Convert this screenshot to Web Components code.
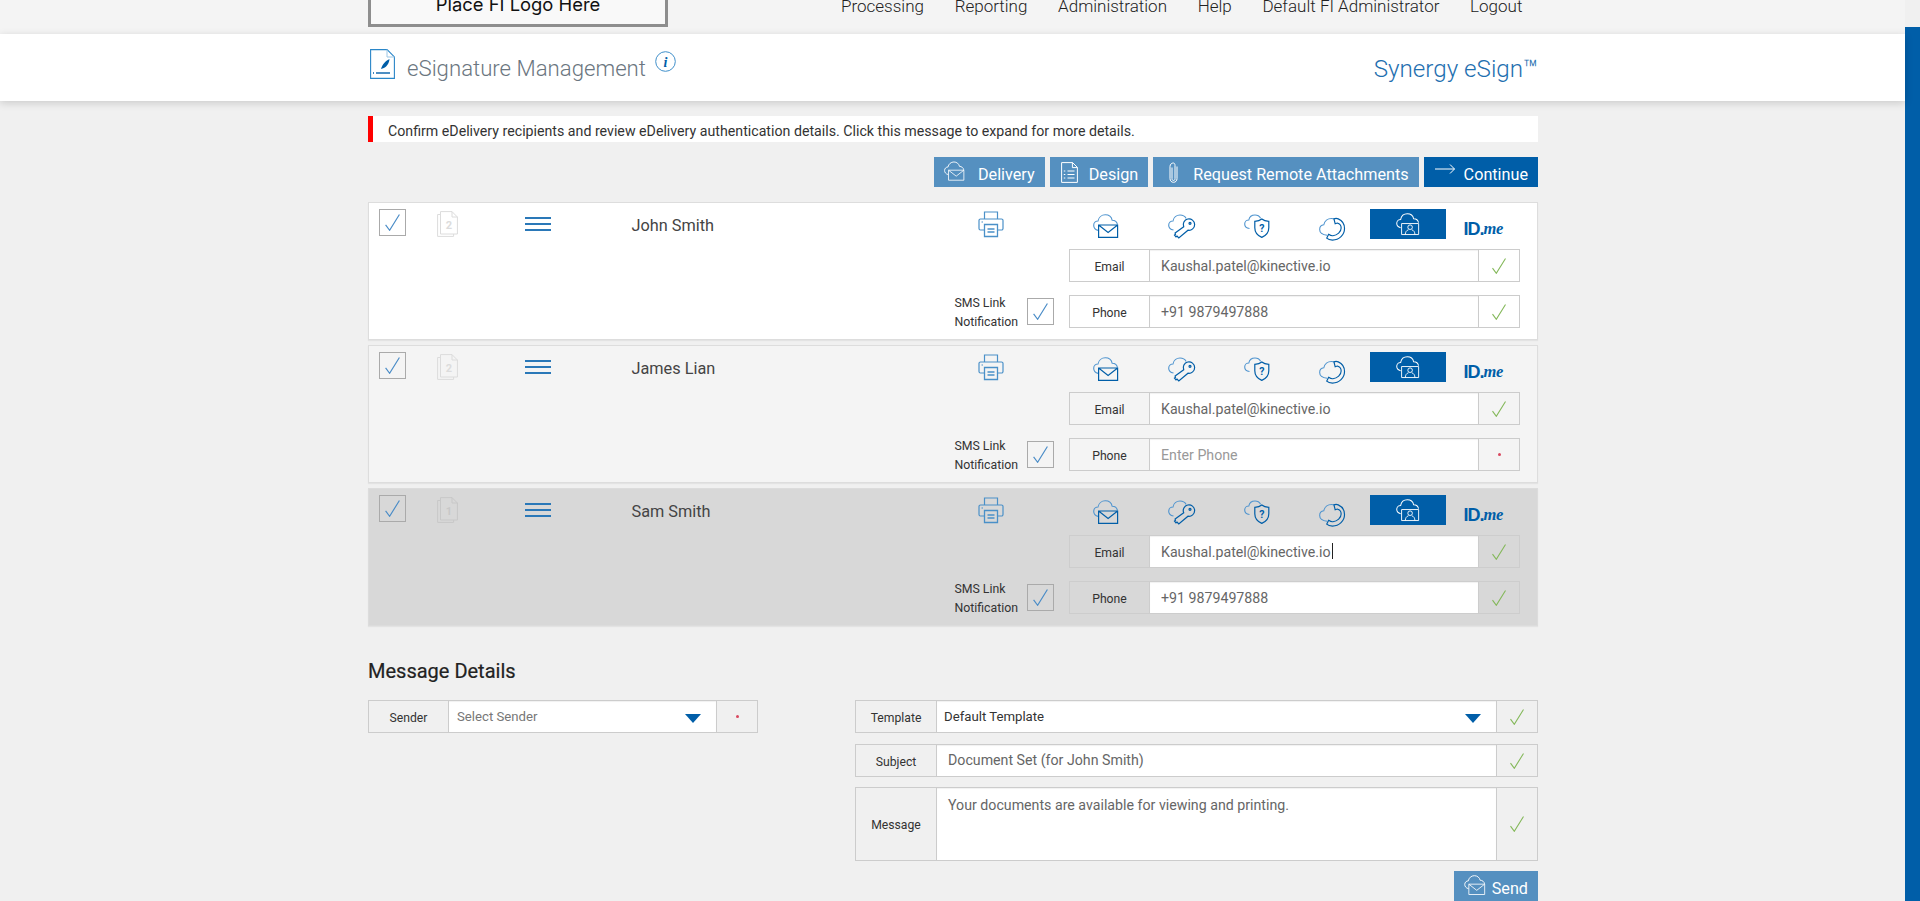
<!DOCTYPE html>
<html>
<head>
<meta charset="utf-8">
<title>eSignature Management</title>
<style>
    html, body { margin: 0; height: 100%; overflow: hidden; }
    body { background: #f0f0f0; font-family: Roboto, "Liberation Sans", sans-serif; color: #333; }
    esign-page { height: 901px; }
</style>
</head>
<body>

<esign-page>
    <top-nav>
        <span slot="logo">Place FI Logo Here</span>
        <span>Processing</span>
        <span>Reporting</span>
        <span>Administration</span>
        <span>Help</span>
        <span>Default FI Administrator</span>
        <span>Logout</span>
    </top-nav>
    <title-band>
        <span slot="title">eSignature Management</span>
        <span slot="product">Synergy eSign™</span>
    </title-band>

    <page-body>
        <alert-bar>Confirm eDelivery recipients and review eDelivery authentication details. Click this message to expand for more details.</alert-bar>

        <tool-bar>
            <action-button icon="envelope" icon-w="21" icon-h="20" pad="10" gap="13" end="10" top="-1">Delivery</action-button>
            <action-button icon="list" icon-w="17" icon-h="21" pad="11" gap="11" end="10">Design</action-button>
            <action-button icon="clip" icon-w="9" icon-h="21" pad="16" gap="15" end="10">Request Remote Attachments</action-button>
            <action-button icon="arrow" icon-w="20" icon-h="10" pad="11" gap="9" end="10" dark top="-3">Continue</action-button>
        </tool-bar>

        <recipient-row count="2">
            <span slot="name">John Smith</span>
            <span slot="email">Kaushal.patel@kinective.io</span>
            <span slot="phone">+91 9879497888</span>
        </recipient-row>
        <recipient-row count="2" tone="soft" phone-missing>
            <span slot="name">James Lian</span>
            <span slot="email">Kaushal.patel@kinective.io</span>
            <span slot="phone">Enter Phone</span>
        </recipient-row>
        <recipient-row count="1" tone="active" caret>
            <span slot="name">Sam Smith</span>
            <span slot="email">Kaushal.patel@kinective.io</span>
            <span slot="phone">+91 9879497888</span>
        </recipient-row>

        <message-details>
            <span slot="heading">Message Details</span>
            <form-field slot="left" label="Sender" label-w="80" status-w="41" status="missing" pad="8" dropdown size="13.200" tint="#777">Select Sender</form-field>
            <form-field slot="right" label="Template" label-w="81" status-w="41" pad="7" dropdown size="13.200" tint="#333">Default Template</form-field>
            <form-field slot="right" label="Subject" label-w="81" status-w="41" pad="11" style="margin-top:1px">Document Set (for John Smith)</form-field>
            <form-field slot="right" label="Message" label-w="81" status-w="41" pad="11" tall>Your documents are available for viewing and printing.</form-field>
            <action-button slot="send" icon="envelope" icon-w="22" icon-h="20" pad="10" gap="6" end="10" top="-1">Send</action-button>
        </message-details>
    </page-body>
</esign-page>

<script>
    const ICONS = {
        envelope: `<svg viewBox="0 0 26 24"><path class="a" d="M5.200 16.400C2.200 15.800.7 13.600.7 11.300.7 8.800 2.700 7 5 7 5.600 3.400 8.600.8 12.300.8c3.500 0 6.200 2.300 6.900 5.500 2.600 0 4.800 1.700 5.300 4.300"/><path class="b" d="M5.600 11h19v12.400h-19zM5.600 11l9.500 7.400L24.600 11"/></svg>`,
        key: `<svg viewBox="0 0 26 24"><path class="a" d="M5.500 16C2.500 15.500.7 13.500.7 11.200.7 8.800 2.700 7 5 7 5.600 3.500 8.500 1 12 1c2.700 0 5 1.300 6.200 3.400"/><path class="b" d="M15.700 12.800a5.700 5.700 0 1 1 4.300 3.400L10.800 24 9 22l-1 .8-1.500-1.700 1-.8-.4-1.200z"/><circle class="b" cx="22" cy="9.300" r="1"/></svg>`,
        shield: `<svg viewBox="0 0 26 24"><path class="a" d="M5.500 14.500C2.500 14.300.7 12.300.7 10 .7 7.700 2.600 6 4.800 6 5.400 3 7.900 1 11 1c2.500 0 4.600 1.300 5.600 3.200"/><path class="b" d="M17.800 5c1.800 1.600 4.300 2.300 7 2.400v6.300c0 4.700-3.200 8-7 9.700-3.800-1.700-7-5-7-9.700V7.400c2.700-.1 5.200-.8 7-2.400z"/><text x="17.800" y="18.200" text-anchor="middle" font-family="Roboto, sans-serif" font-weight="700" font-size="10.500" style="fill:var(--ic-b,#005ea8)">?</text></svg>`,
        phone: `<svg viewBox="0 0 27 24"><path class="a" d="M8.500 18.500C3.700 18 .7 15.500.7 12.500.7 9.800 2.700 7.800 5 7.600 5.800 3.800 9 1 13 1c1.200 0 2.200.2 3.200.6"/><path class="b" d="M15.500 1.500c1.500-.7 3-.7 4.500 0 4.500 2 6.500 6 6.500 10 0 6.500-5.500 12-12.500 12-2 0-4.500-.5-6-2l2-4c1.500 1 3 1.700 4.500 1.500 4.500-.5 8.500-4 8.500-8 0-2.500-1.500-4.500-4-5.200l-2.200.7z"/></svg>`,
        portal: `<svg viewBox="0 0 26 24"><path class="a" d="M5 16C2.200 15.500.7 13.500.7 11.300.7 8.800 2.700 7 5 7 5.600 3.400 8.600.8 12.300.8c3.500 0 6.200 2.300 6.900 5.500 2.600 0 4.800 1.700 5.300 4.300"/><path class="b" d="M6 11.500h18.600v12H6z"/><circle class="b" cx="15.300" cy="15.500" r="2.500"/><path class="b" d="M10 23.500c.3-3 1.300-4.500 3.500-5.200M20.600 23.500c-.3-3-1.300-4.500-3.500-5.200"/></svg>`,
        printer: `<svg viewBox="0 0 26 26"><path class="p" d="M6.500 8V1h13v7M6.500 19H2.500A1.500 1.500 0 0 1 1 17.500v-8A1.500 1.500 0 0 1 2.500 8h21A1.500 1.500 0 0 1 25 9.500v8a1.500 1.500 0 0 1-1.500 1.500h-4"/><path class="p" d="M6.500 13.500h13v12h-13zM9.500 18h7M9.500 21h7" style="stroke-width:1.300"/><path class="p" d="M3.500 11h1.500"/></svg>`,
        list: `<svg viewBox="0 0 17 21"><path class="w" d="M.6.6h11l4.800 4.800v15H.6zM11.400.6v5h5M6.500 9h7M6.500 12.500h7M6.500 16h7M2.800 9h1.500M2.800 12.500h1.500M2.800 16h1.500"/></svg>`,
        clip: `<svg viewBox="0 0 9 21"><path class="w" d="M3 5.500v11c0 1.500.6 2 1.500 2s1.500-.5 1.500-2V3.500C6 1.800 5.300 1 4.300 1 3 1 1 2 1 4.500v12C1 19 2.500 20.300 4.500 20.300S8 19 8 16.500v-12"/></svg>`,
        arrow: `<svg viewBox="0 0 20 10"><path class="w" d="M0 5h19.500M15 .5 19.500 5 15 9.500"/></svg>`
    };

    const iconStyle = `
        svg { display: block; width: 100%; height: 100%; overflow: visible; fill: none; }
        .a { stroke: var(--ic-a, #4f94cf); stroke-width: 1.100; }
        .b { stroke: var(--ic-b, #005ea8); stroke-width: 1.200; }
        .p { stroke: #4a90c8; stroke-width: 1.200; }
        .w { stroke: #fff; stroke-width: 1; }
    `;

    function tick(color, w, h) {
        return `<svg width="${w}" height="${h}" viewBox="0 0 14 16" style="display:block;fill:none"><path d="M.5 10.200 4.300 15.300 13.500.5" stroke="${color}" stroke-width="1.100"/></svg>`;
    }

    class EsignPage extends HTMLElement {
        constructor() {
            super();
            this.attachShadow({ mode: 'open' }).innerHTML = `
                <style>
                    :host { display: flex; }
                    .main { width: 1905px; }
                    .track { width: 15px; background: #f0f0f0; padding-top: 27px; box-sizing: border-box; }
                    .thumb { height: 100%; background: #005ea8; }
                </style>
                <div class="main"><slot></slot></div>
                <div class="track"><div class="thumb"></div></div>`;
        }
    }

    class TopNav extends HTMLElement {
        constructor() {
            super();
            this.attachShadow({ mode: 'open' }).innerHTML = `
                <style>
                    :host { display: flex; align-items: flex-end; height: 34px; overflow: hidden; background: #f4f4f4; padding-left: 368px; box-sizing: border-box; }
                    .logo {
                        width: 300px; height: 46px; box-sizing: border-box; margin-bottom: 7px;
                        border: 3px solid #8e8e8e; background: #f9f9f9;
                        display: flex; align-items: center; justify-content: center;
                        font: 400 18.400px Inter, sans-serif; color: #111;
                    }
                    nav { display: flex; gap: 30.700px; margin-left: 173px; margin-bottom: 18px; font: 300 17px/20px Roboto, sans-serif; color: #222; }
                </style>
                <div class="logo"><slot name="logo"></slot></div>
                <nav><slot></slot></nav>`;
        }
    }

    class TitleBand extends HTMLElement {
        constructor() {
            super();
            this.attachShadow({ mode: 'open' }).innerHTML = `
                <style>
                    :host { display: block; height: 67px; background: #fff; box-shadow: 0 2px 8px rgba(0,0,0,.16); position: relative; }
                    .wrap { width: 1170px; margin-left: 368px; height: 100%; display: flex; position: relative; }
                    .doc { width: 25px; height: 30px; margin: 15px 0 0 2px; flex: none; }
                    h1 { margin: 20px 0 0 12px; font: 300 22.200px/28px Roboto, sans-serif; color: #6b7680; }
                    .info { width: 21px; height: 21px; margin: 17px 0 0 9px; flex: none; }
                    .product { margin: 20px 0 0 auto; font: 300 24.200px/30px Roboto, sans-serif; color: #1f70b0; }
                </style>
                <div class="wrap">
                    <svg class="doc" viewBox="0 0 25 30" fill="none">
                        <path d="M.6.6h16.500l7.300 7.300v21.500H.6z" stroke="#2a86c8" stroke-width="1.100"/>
                        <path d="M17 .6v7.400h7.400" stroke="#9cc7e6"/>
                        <path d="M11 20c1.500-5 5-8.500 8.500-10-.4 4.500-3 8.500-7 9.500z" fill="#005ea8"/>
                        <path d="M6 24h14" stroke="#005ea8" stroke-width="1.400"/>
                        <path d="M3 24h1" stroke="#005ea8" stroke-width="1.400"/>
                    </svg>
                    <h1><slot name="title"></slot></h1>
                    <svg class="info" viewBox="0 0 21 21" fill="none">
                        <circle cx="10.500" cy="10.500" r="9.800" stroke="#3f8fca"/>
                        <text x="10.500" y="15.500" text-anchor="middle" font-family="Liberation Serif, serif" font-style="italic" font-weight="700" font-size="14" fill="#005ea8">i</text>
                    </svg>
                    <div class="product"><slot name="product"></slot></div>
                </div>`;
        }
    }

    class PageBody extends HTMLElement {
        constructor() {
            super();
            this.attachShadow({ mode: 'open' }).innerHTML = `
                <style>
                    :host { display: flex; flex-direction: column; width: 1170px; margin-left: 368px; padding-top: 15px; }
                </style>
                <slot></slot>`;
        }
    }

    class AlertBar extends HTMLElement {
        constructor() {
            super();
            this.attachShadow({ mode: 'open' }).innerHTML = `
                <style>
                    :host {
                        display: block; height: 26px; box-sizing: border-box; background: #fff;
                        border-left: 5px solid #f00; padding: 3px 0 0 15px;
                        font: 400 14.200px/25px Roboto, sans-serif; color: #333;
                    }
                </style>
                <slot></slot>`;
        }
    }

    class ToolBar extends HTMLElement {
        constructor() {
            super();
            this.attachShadow({ mode: 'open' }).innerHTML = `
                <style>
                    :host { display: flex; justify-content: flex-end; gap: 5px; margin: 15px 0; }
                </style>
                <slot></slot>`;
        }
    }

    class ActionButton extends HTMLElement {
        constructor() {
            super();
            const a = n => this.getAttribute(n);
            const bg = this.hasAttribute('dark') ? '#005ea8' : '#5590c0';
            this.attachShadow({ mode: 'open' }).innerHTML = `
                <style>
                    ${iconStyle}
                    :host {
                        display: flex; align-items: center; height: 30px; box-sizing: border-box;
                        background: ${bg}; color: #fff; font: 400 16.200px/20px Roboto, sans-serif;
                        padding: 0 ${a('end')}px 0 ${a('pad')}px;
                        --ic-a: #fff; --ic-b: #fff;
                    }
                    .b { stroke-width: 1; }
                    .i { width: ${a('icon-w')}px; height: ${a('icon-h')}px; margin-right: ${a('gap')}px; flex: none; transform: translateY(${a('top') || 0}px); }
                    .t { padding-top: 5px; }
                </style>
                <span class="i">${ICONS[a('icon')]}</span><span class="t"><slot></slot></span>`;
        }
    }

    class FormField extends HTMLElement {
        constructor() {
            super();
            const a = n => this.getAttribute(n);
            const tall = this.hasAttribute('tall');
            const mark = a('status') === 'missing' ? '<i class="dot"></i>' : tick('#84b85a', 14, 16);
            this.attachShadow({ mode: 'open' }).innerHTML = `
                <style>
                    :host {
                        display: flex; height: ${tall ? 74 : 33}px; box-sizing: border-box;
                        border: 1px solid var(--field-line, #ccc);
                        background: var(--field-bg, #f0f0f0);
                        font-family: Roboto, sans-serif;
                    }
                    .label {
                        width: ${a('label-w') - 1}px; flex: none; display: flex; align-items: center; justify-content: center;
                        font-size: 12.200px; color: #333; padding-top: 2px; box-sizing: border-box;
                    }
                    .value {
                        flex: 1; min-width: 0; box-sizing: border-box; background: #fff;
                        border-left: 1px solid var(--field-line, #ccc);
                        border-right: 1px solid var(--field-line, #ccc);
                        box-shadow: inset 0 1px 1px rgba(0,0,0,.06);
                        padding: ${tall ? '7px' : '0'} 12px 0 ${a('pad')}px;
                        font-size: ${a('size') || 14.2}px; line-height: ${tall ? '20px' : 'var(--value-lh, 31px)'};
                        color: var(--value-color, ${a('tint') || '#666'});
                        display: flex; ${tall ? '' : 'align-items: flex-start;'}
                    }
                    .caret { width: 1px; height: 16px; background: #222; margin: 7px 0 0 1px; display: none; }
                    :host([caret]) .caret { display: block; }
                    .arrow { margin: 13px 3px 0 auto; width: 0; height: 0; border: 8px solid transparent; border-top: 9px solid #005ea8; border-bottom: 0; }
                    .status { width: ${a('status-w') - 1}px; flex: none; display: flex; align-items: center; justify-content: center; }
                    .dot { width: 3px; height: 3px; border-radius: 50%; background: #d9485f; }
                </style>
                <div class="label">${a('label')}</div>
                <div class="value"><span><slot></slot></span><i class="caret"></i>${this.hasAttribute('dropdown') ? '<i class="arrow"></i>' : ''}</div>
                <div class="status">${mark}</div>`;
        }
    }

    class CheckBox extends HTMLElement {
        constructor() {
            super();
            this.attachShadow({ mode: 'open' }).innerHTML = `
                <style>
                    :host { display: flex; align-items: center; justify-content: center; width: 27px; height: 27px; box-sizing: border-box; border: 1px solid #aaa; flex: none; }
                </style>
                ${tick('#4a8cc7', 15, 17)}`;
        }
    }

    class RecipientRow extends HTMLElement {
        constructor() {
            super();
            const tone = this.getAttribute('tone') || 'plain';
            const count = this.getAttribute('count');
            const faded = tone === 'active' ? '#c8c8c8' : '#dcdcdc';
            const icons = ['envelope', 'key', 'shield', 'phone'].map(n =>
                `<div class="cell"><span class="ic ${n}">${ICONS[n]}</span></div>`).join('');
            const caret = this.hasAttribute('caret') ? 'caret' : '';
            const missing = this.hasAttribute('phone-missing');
            this.attachShadow({ mode: 'open' }).innerHTML = `
                <style>
                    ${iconStyle}
                    :host {
                        display: grid; box-sizing: border-box; height: 138px; margin-bottom: 5px;
                        grid-template-columns: 68px 88px 107px 346px 91px 451px;
                        grid-template-rows: 30px 33px 33px;
                        row-gap: 10px;
                        padding-top: 6px;
                        border: 1px solid #ddd; box-shadow: 0 1px 1px rgba(0,0,0,.05);
                        background: #fff; font-family: Roboto, sans-serif;
                        --field-bg: #fff; --value-lh: 32px;
                    }
                    :host([tone="soft"]) { background: #f4f4f4; --field-bg: #f4f4f4; }
                    :host([tone="active"]) { background: #d8d8d8; --field-bg: #d8d8d8; --field-line: #cdcdcd; border-color: #dcdcdc; }
                    .sel { grid-column: 1; grid-row: 1 / 4; padding-left: 10px; }
                    .copies { grid-column: 2; grid-row: 1 / 4; padding-top: 2px; }
                    .copies svg { width: 21px; height: 26px; display: block; fill: none; }
                    .drag { grid-column: 3; grid-row: 1 / 4; padding-top: 8px; width: 26px; }
                    .drag i { display: block; height: 2px; background: #2a78b8; margin-bottom: 4px; }
                    .name { grid-column: 4; grid-row: 1 / 4; font-size: 16.300px; line-height: 20px; color: #444; padding-top: 7px; margin-left: -.5px; }
                    .print { grid-column: 5; grid-row: 1; width: 26px; height: 26px; padding-top: 2px; }
                    .methods { grid-row: 1; grid-column: 6; display: flex; margin-left: -1px; width: 453px; }
                    .cell { width: 75.500px; height: 30px; flex: none; display: flex; justify-content: center; padding-top: 5px; box-sizing: border-box; }
                    .cell .ic { width: 26px; height: 24px; display: block; }
                    .cell.on { background: #005ea8; padding-top: 4px; --ic-a: #fff; --ic-b: #fff; }
                    .cell.on .b { stroke-width: 1; }
                    .cell.on .ic { height: 22px; width: 24px; }
                    .idme { color: #005ea8; font: 700 18px/18px "Liberation Sans", sans-serif; letter-spacing: -1px; padding-top: 11px; white-space: nowrap; }
                    .idme em { font: italic 700 16.500px/18px "Liberation Serif", serif; letter-spacing: -.3px; }
                    form-field { grid-column: 6; }
                    .email { grid-row: 2; }
                    .phone { grid-row: 3; margin-top: 3px; }
                    .sms { grid-row: 3; grid-column: 4 / 6; justify-self: end; margin: 3px 15px 0 0; display: flex; align-items: center; gap: 9px; font-size: 12.300px; line-height: 19px; color: #333; }
                    .sms span { padding-top: 5px; }
                    .sms check-box { margin-top: 2px; }
                </style>
                <div class="sel"><check-box></check-box></div>
                <div class="copies">
                    <svg viewBox="0 0 21 26">
                        <path d="M3.500 3.500H.6v21.900h16V23" stroke="${faded}"/>
                        <path d="M3.500.6h11.500l5.400 5.400v17H3.500z" stroke="${faded}" fill="none"/>
                        <path d="M15 .6V6h5.400" stroke="${faded}"/>
                        <text x="12" y="18" text-anchor="middle" font-family="Roboto, sans-serif" font-weight="700" font-size="11" fill="${faded}">${count}</text>
                    </svg>
                </div>
                <div class="drag"><i></i><i></i><i></i></div>
                <div class="name"><slot name="name"></slot></div>
                <span class="print">${ICONS.printer}</span>
                <div class="methods">
                    ${icons}
                    <div class="cell on"><span class="ic">${ICONS.portal}</span></div>
                    <div class="cell idme">ID.<em>me</em></div>
                </div>
                <form-field class="email" label="Email" label-w="80" status-w="41" pad="11" ${caret}><slot name="email"></slot></form-field>
                <div class="sms"><span>SMS Link<br>Notification</span><check-box></check-box></div>
                <form-field class="phone" label="Phone" label-w="80" status-w="41" pad="11" ${missing ? 'status="missing" style="--value-color:#999"' : ''}><slot name="phone"></slot></form-field>`;
        }
    }

    class MessageDetails extends HTMLElement {
        constructor() {
            super();
            this.attachShadow({ mode: 'open' }).innerHTML = `
                <style>
                    :host { display: block; padding-top: 25px; }
                    h2 { margin: 0 0 14px; font: 400 20px/30px Roboto, sans-serif; color: #222; -webkit-text-stroke: .2px #222; }
                    .cols { display: flex; justify-content: space-between; align-items: flex-start; }
                    .left { width: 390px; display: flex; flex-direction: column; }
                    .right { width: 683px; display: flex; flex-direction: column; gap: 10px; }
                    .send { display: flex; justify-content: flex-end; }
                </style>
                <h2><slot name="heading"></slot></h2>
                <div class="cols">
                    <div class="left"><slot name="left"></slot></div>
                    <div class="right"><slot name="right"></slot><div class="send"><slot name="send"></slot></div></div>
                </div>`;
        }
    }

    customElements.define('esign-page', EsignPage);
    customElements.define('top-nav', TopNav);
    customElements.define('title-band', TitleBand);
    customElements.define('page-body', PageBody);
    customElements.define('alert-bar', AlertBar);
    customElements.define('tool-bar', ToolBar);
    customElements.define('action-button', ActionButton);
    customElements.define('form-field', FormField);
    customElements.define('check-box', CheckBox);
    customElements.define('recipient-row', RecipientRow);
    customElements.define('message-details', MessageDetails);
</script>
</body>
</html>
